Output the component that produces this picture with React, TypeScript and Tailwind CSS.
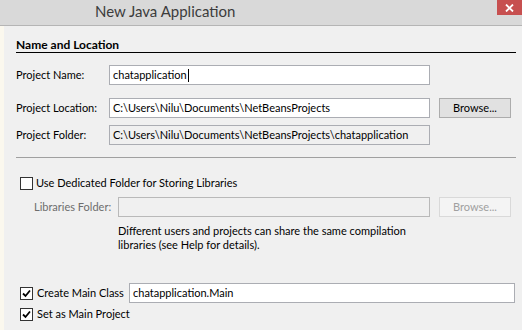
import React from "react";

const font = { fontFamily: 'Lato, "Noto Sans", sans-serif' };

function Check({ checked }: { checked?: boolean }) {
  return (
    <div className="w-[13px] h-[13px] border border-[#333333] bg-white flex items-center justify-center shrink-0">
      {checked && (
        <svg width="9" height="9" viewBox="0 0 9 9">
          <path d="M1 4.5 L3.5 7 L8 1.5" stroke="#000" strokeWidth="1.8" fill="none" />
        </svg>
      )}
    </div>
  );
}

export default function App() {
  return (
    <div
      className="w-[522px] h-[330px] bg-[#f0f0f0] overflow-hidden text-[11px] text-black leading-[16px] whitespace-nowrap"
      style={font}
    >
      <div className="relative h-[26px] bg-[#d9d9d9] border-b border-[#b5b5b5] flex items-center pl-[95px]">
        <span className="text-[15px] text-[#3c3c3c] leading-[20px] -mt-[3px]">New Java Application</span>
        <div className="absolute top-0 right-0 w-[25px] h-[15px] bg-[#c75050] flex items-center justify-center">
          <svg width="9" height="8" viewBox="0 0 9 8">
            <path d="M1 0.5 L8 7.5 M8 0.5 L1 7.5" stroke="#fff" strokeWidth="1.8" />
          </svg>
        </div>
      </div>
      <div className="flex h-[304px]">
        <div className="w-[4px] bg-[#fbf8ee]" />
        <div className="flex-1 pl-[12px] pr-[6px] flex flex-col">
          <div className="mt-[10px] h-[17px] border-b border-black font-bold text-[12px] leading-[18px]">Name and Location</div>

          <div className="mt-[12px] flex items-center h-[20px]">
            <div className="w-[93px]">Project Name:</div>
            <div className="w-[321px] h-[20px] border border-[#abadb3] bg-white px-[3px] flex items-center">
              chatapplication<span className="w-px h-[13px] bg-black ml-px" />
            </div>
          </div>

          <div className="mt-[13px] flex items-center h-[20px]">
            <div className="w-[93px]">Project Location:</div>
            <div className="w-[321px] h-[20px] border border-[#abadb3] bg-white px-[3px] flex items-center">
              C:\Users\Nilu\Documents\NetBeansProjects
            </div>
            <div className="ml-[9px] w-[72px] h-[20px] border border-[#acacac] bg-[#e1e1e1] flex items-center justify-center">
              Browse...
            </div>
          </div>

          <div className="mt-[7px] flex items-center h-[20px]">
            <div className="w-[93px]">Project Folder:</div>
            <div className="w-[321px] h-[20px] border border-[#abadb3] bg-[#f0f0f0] px-[3px] flex items-center">
              C:\Users\Nilu\Documents\NetBeansProjects\chatapplication
            </div>
          </div>

          <div className="mt-[12px] h-px bg-[#a0a0a0]" />

          <div className="mt-[17px] flex items-center gap-[3px] pl-[4px] h-[16px]">
            <Check />
            <span>Use Dedicated Folder for Storing Libraries</span>
          </div>

          <div className="mt-[6px] flex items-center h-[20px]">
            <div className="w-[102px] pl-[18px] text-[#6d6d6d]">Libraries Folder:</div>
            <div className="w-[312px] h-[20px] border border-[#b9b9b9] bg-[#f0f0f0]" />
            <div className="ml-[9px] w-[72px] h-[20px] border border-[#d9d9d9] bg-[#f4f4f4] text-[#a0a0a0] flex items-center justify-center">
              Browse...
            </div>
          </div>

          <div className="mt-[7px] pl-[102px] leading-[14px]">
            <div>Different users and projects can share the same compilation</div>
            <div>libraries (see Help for details).</div>
          </div>

          <div className="mt-[31px] flex items-center h-[20px] pl-[4px]">
            <Check checked />
            <span className="ml-[4px] w-[92px]">Create Main Class</span>
            <div className="w-[386px] h-[20px] border border-[#abadb3] bg-white px-[3px] flex items-center">
              chatapplication.Main
            </div>
          </div>

          <div className="mt-[3px] flex items-center gap-[4px] pl-[4px] h-[16px]">
            <Check checked />
            <span>Set as Main Project</span>
          </div>
        </div>
      </div>
    </div>
  );
}
